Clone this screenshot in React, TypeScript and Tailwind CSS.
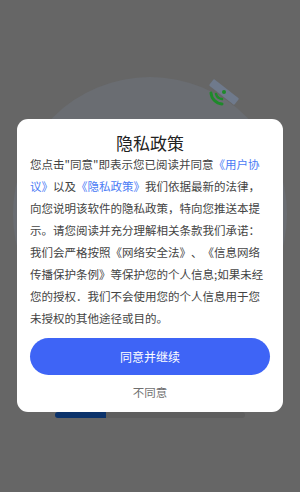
export default function App() {
  return (
    <div
      className="relative w-[300px] h-[492px] overflow-hidden bg-[#666666]"
      style={{ fontFamily: '"Noto Sans CJK SC", "Noto Sans", sans-serif' }}
    >
      {/* dimmed page behind the dialog */}
      <div className="flex flex-col items-center pt-[77px]">
        <div className="relative w-[274px] h-[274px] rounded-full bg-[#6a6d72]">
          <svg className="absolute left-[192px] top-[1px]" width="36" height="32" viewBox="0 0 36 32">
            <rect x="3" y="10" width="32" height="8" rx="1" fill="#6f7a8c" transform="rotate(38 19 14)" />
            <circle cx="19" cy="14" r="2" fill="#1e8a2a" />
            <path d="M6 15 A12 12 0 0 0 17 26" stroke="#1e8a2a" strokeWidth="3" fill="none" strokeLinecap="round" />
            <path d="M11 16 A7 7 0 0 0 17 21" stroke="#1e8a2a" strokeWidth="2.6" fill="none" strokeLinecap="round" />
          </svg>
        </div>
        <div className="mt-[61px] w-[190px] h-[6px] rounded-full bg-[#5e5e5e] overflow-hidden">
          <div className="w-[51px] h-full bg-[#0c336b]" />
        </div>
      </div>

      {/* privacy dialog overlay */}
      <div className="absolute inset-0 flex flex-col items-center pt-[119px]">
        <div className="flex flex-col w-[266px] rounded-[11px] bg-white px-[13px] pt-[14px] pb-[10px]">
          <div className="text-center text-[17px] leading-[20px] text-[#222222]">隐私政策</div>
          <p className="text-[11.5px] leading-[22px] text-[#444444] [text-spacing-trim:space-all]">
            您点击"同意"即表示您已阅读并同意
            <span className="text-[#4b7bf5]">《用户协议》</span>
            以及
            <span className="text-[#4b7bf5]">《隐私政策》</span>
            我们依据最新的法律，向您说明该软件的隐私政策，特向您推送本提示。请您阅读并充分理解相关条款我们承诺：我们会严格按照《网络安全法》、《信息网络传播保护条例》等保护您的个人信息;如果未经您的授权．我们不会使用您的个人信息用于您未授权的其他途径或目的。
          </p>
          <button className="mt-[9px] h-[37px] rounded-full bg-[#3e64f6] text-white text-[12px]">
            同意并继续
          </button>
          <div className="mt-[7px] text-center text-[11.5px] leading-[20px] text-[#6f6f6f]">不同意</div>
        </div>
      </div>
    </div>
  );
}
